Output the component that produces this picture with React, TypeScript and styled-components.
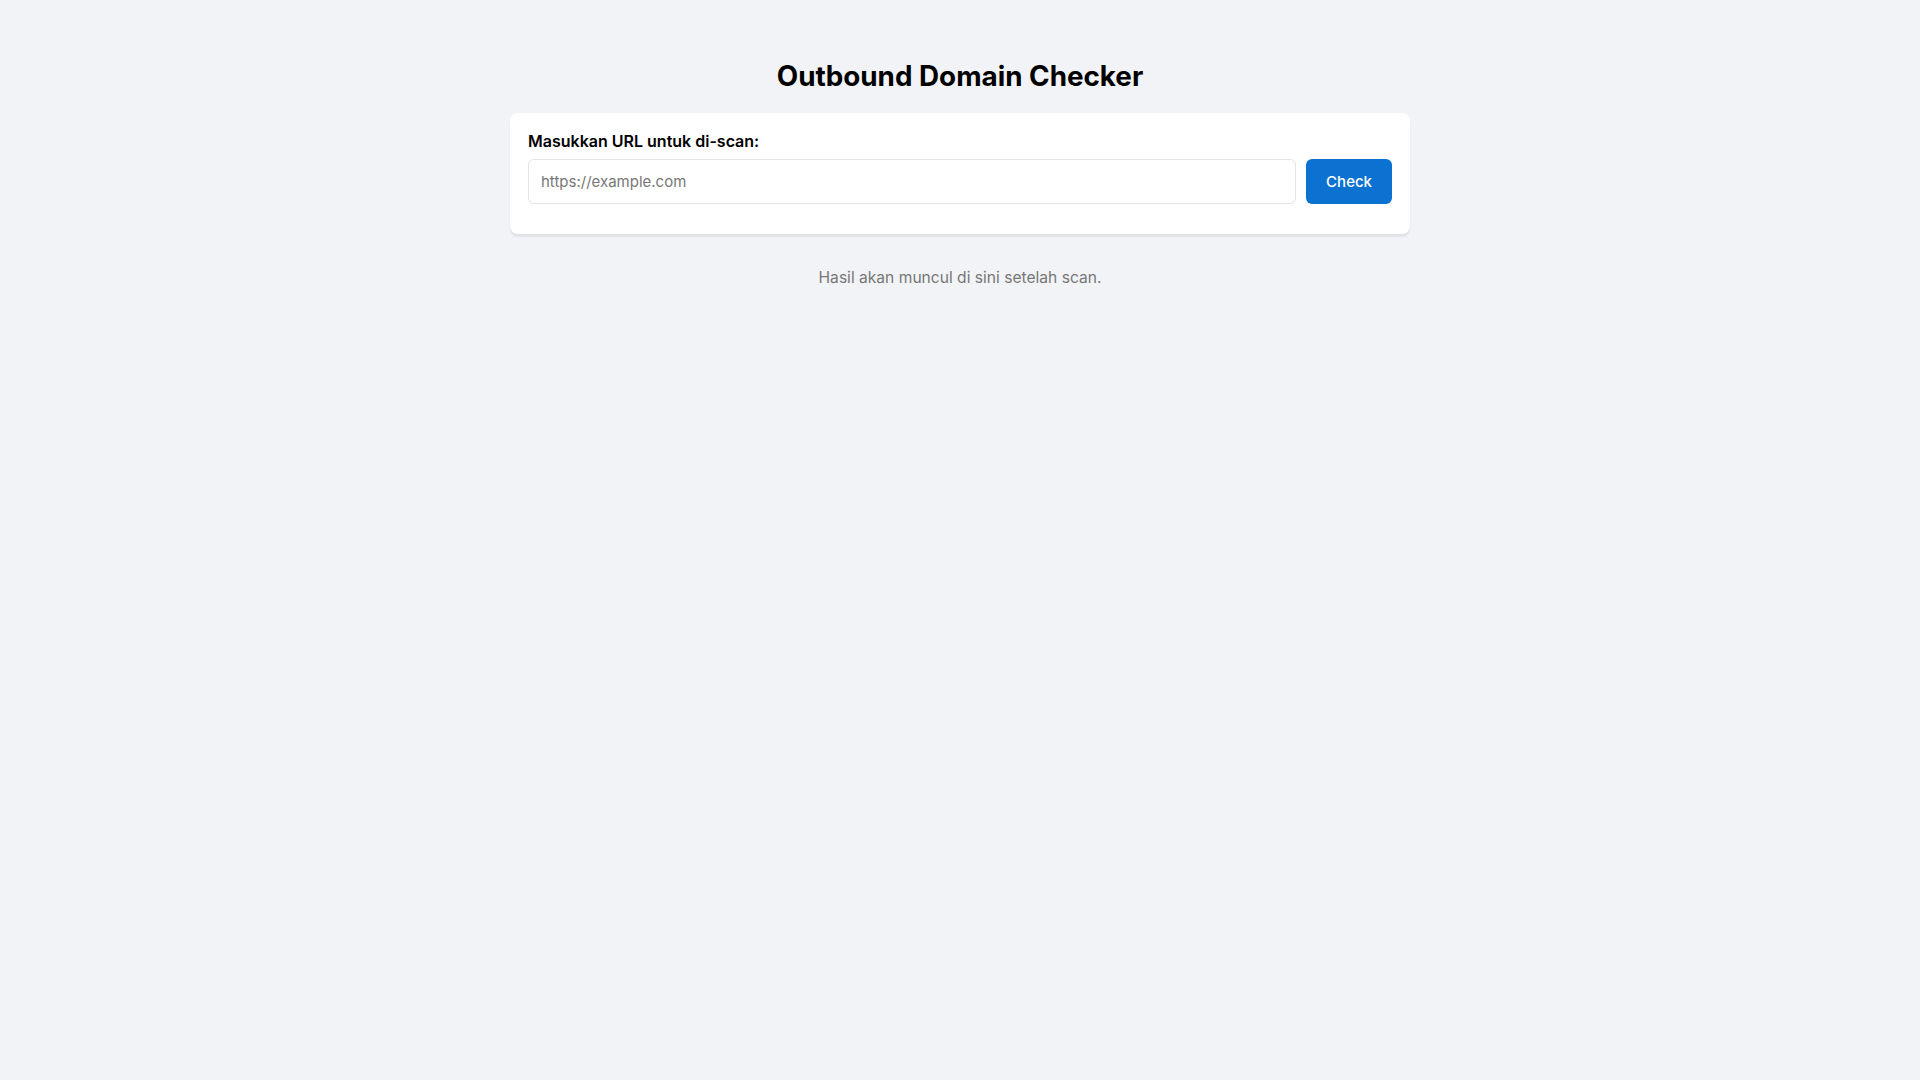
import React from "react";
import styled, { createGlobalStyle } from "styled-components";

const GlobalStyle = createGlobalStyle`
  html, body {
    margin: 0;
    padding: 0;
    background: #f2f3f6;
    font-family: Inter, "Noto Sans", "Liberation Sans", sans-serif;
    color: #000;
  }
  * { box-sizing: border-box; }
`;

const Page = styled.main`
  max-width: 900px;
  margin: 0 auto;
  padding-top: 59px;
`;

const Title = styled.h1`
  margin: 0 0 20px;
  text-align: center;
  font-size: 27.8px;
  font-weight: 700;
  line-height: 34px;
  color: #000;
`;

const Card = styled.section`
  background: #fff;
  border-radius: 8px;
  padding: 18px 18px 30px;
  box-shadow: 0 3px 2px rgba(0, 0, 0, 0.07);
`;

const Label = styled.label`
  display: block;
  font-size: 16px;
  font-weight: 600;
  line-height: 20px;
  margin-bottom: 8px;
`;

const Row = styled.div`
  display: flex;
  gap: 10px;
`;

const Input = styled.input`
  flex: 1;
  height: 45px;
  padding: 0 12px;
  border: 1px solid #e2e3e6;
  border-radius: 6px;
  font-family: inherit;
  font-size: 15px;
  color: #111;
  outline: none;
  &::placeholder { color: #777; }
`;

const Button = styled.button`
  height: 45px;
  padding: 0 20px;
  border: none;
  border-radius: 6px;
  background: #0b72d1;
  color: #fff;
  font-family: inherit;
  font-size: 15px;
  font-weight: 500;
  cursor: pointer;
`;

const Hint = styled.p`
  margin: 34px 0 0;
  text-align: center;
  font-size: 15.6px;
  line-height: 19px;
  color: #777;
`;

export default function App() {
  return (
    <>
      <GlobalStyle />
      <Page>
        <Title>Outbound Domain Checker</Title>
        <Card>
          <Label htmlFor="url">Masukkan URL untuk di-scan:</Label>
          <Row>
            <Input id="url" type="text" placeholder="https://example.com" />
            <Button type="button">Check</Button>
          </Row>
        </Card>
        <Hint>Hasil akan muncul di sini setelah scan.</Hint>
      </Page>
    </>
  );
}
